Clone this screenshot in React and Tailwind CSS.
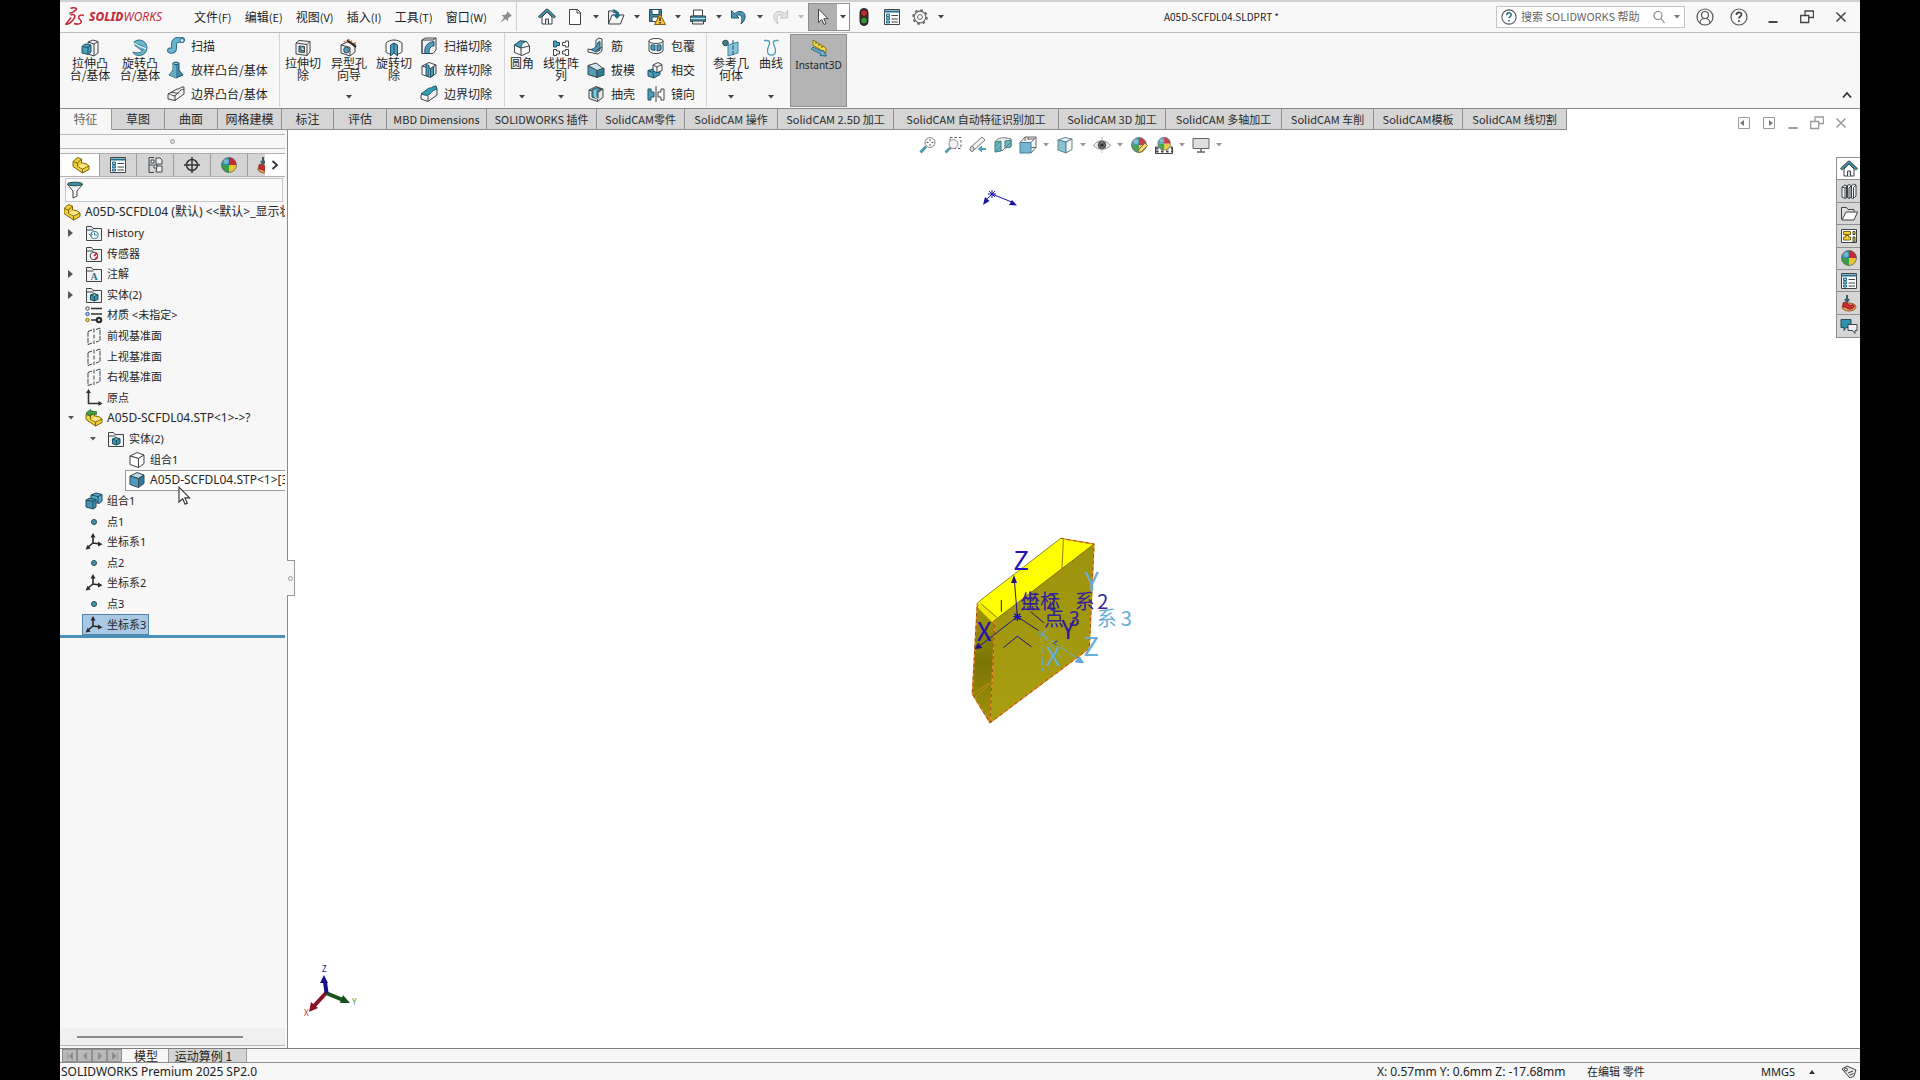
import React from 'react';

const UI = "font-['Noto_Sans','Noto_Sans_CJK_SC',sans-serif]";
const CJK = "font-['Noto_Sans_CJK_SC',sans-serif]";

function Svg({ children, size = 'size-[18px]', box = '0 0 18 18' }) {
  return (
    <svg viewBox={box} className={`${size} shrink-0`} fill="none" stroke="#3f4448" strokeWidth="1" strokeLinejoin="round" aria-hidden="true">
      {children}
    </svg>
  );
}

const teal = '#4f9dbb';
const deep = '#1f6f8b';
const pale = '#9ccfe0';

// Isometric box used by most of the feature icons
function Box({ top = '#fff', left = '#fff', right = '#e4e4e4' }) {
  return (
    <>
      <path d="M2 5 9 1.5l7 2.5-5.500 3.500z" fill={top} />
      <path d="M2 5l8.500 2.500v9L2 13.500z" fill={left} />
      <path d="M10.500 7.500 16 4v8.500l-5.500 4z" fill={right} />
    </>
  );
}

function Sphere() {
  return (
    <>
      <path d="M9 9V1.500A7.500 7.500 0 0 0 1.500 9z" fill="#2f8fb0" stroke="none" />
      <path d="M9 9h7.500A7.500 7.500 0 0 0 9 1.500z" fill="#c22a3a" stroke="none" />
      <path d="M9 9v7.500A7.500 7.500 0 0 0 16.500 9z" fill="#e6c832" stroke="none" />
      <path d="M9 9H1.500A7.500 7.500 0 0 0 9 16.500z" fill="#3c9a48" stroke="none" />
      <circle cx="6" cy="5.500" r="2.500" fill="#fff" fillOpacity=".35" stroke="none" />
      <circle cx="9" cy="9" r="7.500" stroke="#555" strokeWidth=".7" />
    </>
  );
}

function Folder({ children }) {
  return (
    <Svg>
      <path d="M1.500 16.500V2.500h5l1.500 2h8.500v12z" fill="#f2f2f2" />
      <path d="M1.500 6h7" />
      {children}
    </Svg>
  );
}

const Part = () => (
  <>
    <path d="M1 5.500 5.500 1.500l4 1.500v4l4 .500L17 10v3.500L10.500 17 1 10.500z" fill="#f2cf35" stroke="#7b6412" />
    <path d="M1 5.500 5.500 7v3.500l5 2.500L17 10M10.500 13v4M5.500 7l4-4" stroke="#7b6412" />
    <path d="M6 10.500l4-3 6 2.300-5.500 2.700z" fill="#fbe985" stroke="none" />
  </>
);

const Triad = () => (
  <g stroke="#2b2b2b" strokeWidth="1.600">
    <path d="M8 10V3M8 10l7 1M8 10l-5 4" />
    <path d="M8 0 5.500 4.500h5zM17.500 11.300l-4.500-2.700v5zM.5 16.500l5.200-1-3-3.700z" fill="#2b2b2b" stroke="none" />
  </g>
);

const Plane = () => (
  <>
    <path d="M3 4.500 7 3M11 2.500l4-1.500v12.500L11 15M7 16l-4 1.500v-13" strokeDasharray="5 1" />
    <path d="M9 1.500v15.500" strokeDasharray="4 2" />
  </>
);

const House = () => (
  <>
    <path d="M4 9v7h10V9L9 4z" fill="#fff" />
    <path d="M7.500 16v-5h3v5" fill="#dcdcdc" />
    <path d="M1 9.500 9 2l8 7.500" stroke="#3f4448" strokeWidth="3" />
    <path d="M1.500 9.300 9 2.300l7.500 7" stroke="#37a0b4" strokeWidth="1.500" />
  </>
);

const Panel = () => (
  <>
    <path d="M1.500 1.500h15v15h-15z" fill="#fff" />
    <path d="M1.500 3.500h15" stroke={deep} strokeWidth="2" />
    <path d="M3.500 6h3v2.500h-3zM3.500 9.700h3v2h-3zM3.500 13h3v2h-3z" fill={pale} stroke={deep} />
    <path d="M8.500 7.500H15M8.500 11H15M8.500 14H15" />
  </>
);

const Pointer = () => <path d="M4.500 1v13.500l3.300-3 2.200 5 2-1-2.200-4.800H14z" fill="#fff" />;

const icons = {
  home: <House />,
  newDoc: <path d="M3.500 1.500h8l3 3v12h-11zM11 1.500V5h3.500" fill="#fff" />,
  open: (
    <>
      <path d="M1.500 16V3h4l1 1.500h5V8" fill="#e8e8e8" />
      <path d="M1.500 16 5 7h12l-3.500 9z" fill="#f4f4f4" />
      <path d="M5.500 1.500c4 0 6 1.500 6 5h2.500L10 11 6 6.500h2.500c0-2-1-3-3-3.500z" fill={deep} stroke="none" />
    </>
  ),
  save: (
    <>
      <path d="M1.500 1.500h12v12h-12z" fill="#3d8ba6" stroke="#234d5c" />
      <path d="M4 1.500h7v5H4zM4 9h6v4.500H4z" fill="#fff" stroke="#234d5c" />
      <path d="M12 6l5.500 10.500h-11z" fill="#f5c242" stroke="#8a5a10" />
      <path d="M12 9.500V13M12 14v1.500" stroke="#222" strokeWidth="1.400" />
    </>
  ),
  print: (
    <>
      <path d="M4.500 2h9v6h-9z" fill="#fff" />
      <path d="M1.500 8h15v5.500h-15z" fill="#3d8ba6" />
      <path d="M1.500 10.500h15" stroke="#bfe0ea" />
      <path d="M3.500 13h11v3h-11z" fill="#eee" />
    </>
  ),
  undo: <path d="M1.500 2.500V10H9L6.500 7.500c4-2 7 1 4.500 8.500 6.500-5 5-13.500-2-12.500-2 .3-3.500 1.300-4.500 2.300z" fill="#4a94b5" stroke="#2b5b70" />,
  redo: <path d="M16.500 2.500V10H9l2.500-2.500c-4-2-7 1-4.500 8.500C.5 11 2 2.500 9 3.500c2 .3 3.500 1.300 4.500 2.300z" fill="#e3e3e3" stroke="#c4c4c4" />,
  cursor: <Pointer />,
  light: (
    <>
      <rect x="5" y=".5" width="8" height="17" rx="4" fill="#3a2a24" stroke="#222" />
      <circle cx="9" cy="5" r="2.800" fill="#c22b2b" stroke="none" />
      <circle cx="9" cy="12.500" r="2.800" fill="#2e9a3c" stroke="none" />
    </>
  ),
  panel: <Panel />,
  gear: (
    <>
      <circle cx="9" cy="9" r="5.800" stroke="#666" strokeWidth="1.200" fill="#f7f7f7" />
      <circle cx="9" cy="9" r="7" stroke="#666" strokeWidth="1.600" strokeDasharray="2.700 2.800" />
      <circle cx="9" cy="9" r="2.400" stroke="#666" fill="#fff" />
    </>
  ),
  extrude: (
    <>
      <path d="M7 3l5-2 5 1.500V14l-4 3-6-2z" fill="#f4f4f4" />
      <path d="M13 17V5L7 3M13 5l4-2.500" />
      <path d="M1 7.500 4 5l6 1v7l-3 2.500-6-1.500z" fill={teal} stroke="#1c5369" />
      <path d="M1 7.500l6 1L10 6M7 8.500v7" stroke="#1c5369" />
    </>
  ),
  revolve: (
    <>
      <path d="M3 3c4-3.500 10-2 12 2s1 9-4 11c-4 1.500-8 0-9-3 4 1.500 8 1 9-1.500L4 6.500z" fill="#6bb3cb" stroke="#2b7089" />
      <path d="M4 6.500c4-2 8 0 9 3l-2 2" stroke="#2b7089" />
      <path d="M2 4l13 6" stroke="#eef8fa" strokeWidth="1.200" />
    </>
  ),
  sweep: (
    <>
      <path d="M3 13.500c5 1 4-2 4-6 0-4 3-5.500 8-4.500" stroke="#2b7089" strokeWidth="6" strokeLinecap="round" />
      <path d="M3 13.500c5 1 4-2 4-6 0-4 3-5.500 8-4.500" stroke="#6bb3cb" strokeWidth="4" strokeLinecap="round" />
      <circle cx="15" cy="3.500" r="2" fill="#d9eef4" stroke="#2b7089" />
    </>
  ),
  loft: (
    <>
      <path d="M6 2h6v7l4 5-7 3-7-3 4-5z" fill="#4286a3" stroke="#1c5369" />
      <path d="M6 2h3v15l-7-3 4-5z" fill="#6aa9c2" stroke="none" />
      <ellipse cx="9" cy="2.300" rx="3" ry="1.200" fill={pale} stroke="#1c5369" />
    </>
  ),
  boundary: (
    <>
      <path d="M1 9l9-5c2 1 4-3 7-2v7l-9 6.500L1 14z" fill="#f1f1f1" />
      <path d="M1 9c3-1 4 3 7 1.500s5-7 9-6M8 10.500V16M4 7.500c3-1 5 2 8 0" />
    </>
  ),
  cutExtrude: (
    <>
      <path d="M2 4l3-2.500 11 1V13l-3 3.500L2 15z" fill="#f5f5f5" />
      <path d="M2 4l11 1.500v11M13 5.500l3-3" />
      <path d="M5 7l5.500.500v6L5 13z" fill={teal} />
      <path d="M7 7.200v4l3.500.300" fill="#fff" />
    </>
  ),
  hole: (
    <>
      <path d="M1 6l6-3 8 2v8l-5 4-9-3z" fill="#f1f1f1" />
      <path d="M1 6l9 2.500V17" />
      <ellipse cx="6.500" cy="11" rx="2.800" ry="3" fill={teal} />
      <path d="M7 1l9 7" stroke="#222" strokeWidth="2" />
      <path d="M4 2l1 1M9 0v2M12 1.500l-1 1.500M16 4h-2" stroke="#d9772b" strokeWidth="1.500" />
    </>
  ),
  cutRevolve: (
    <>
      <path d="M1 4c4-4 12-4 16 0v9c-1 1-3 2-4.500 2V8L9 10 5.500 8v7c-2 0-3.500-1-4.500-2z" fill="#f4f4f4" />
      <path d="M5.500 6 9 4l3.500 2v11L9 14l-3.500 3z" fill={teal} stroke="#1c5369" />
      <path d="M9 4v10" stroke="#1c5369" />
    </>
  ),
  cutSweep: (
    <>
      <path d="M2 3l3-2h11v12l-3 3.500H2z" fill="#f3f3f3" />
      <path d="M2 3h11l3-2M2 3v13.500" />
      <path d="M5 16.500C4 10 7 5 14 4.500V9c-4 0-5 3-5 7.500z" fill={teal} stroke="#1c5369" />
    </>
  ),
  cutLoft: (
    <>
      <Box />
      <path d="M6 3.500l3 1v11l-3-1zM10.500 7.500l3-1.500v8l-3 2z" fill={teal} stroke="#1c5369" />
    </>
  ),
  cutBoundary: (
    <>
      <path d="M1 10l9-4 7-2v6l-9 6.500L1 14z" fill="#f1f1f1" />
      <path d="M1 9l8-6c2 1 4-2 7-2l1 3c-4 0-6 5-9 6S3 9 1 9z" fill="#39a2b4" stroke="#1c5369" />
      <path d="M8 10.500V16" />
    </>
  ),
  fillet: (
    <>
      <path d="M1.500 6 7 2l6.500.500 3 4.500v6L9 16.500 1.500 13.500z" fill="#f8f8f8" />
      <path d="M8 9v7.500M8 9l8.500-2M1.500 6 8 9" />
      <path d="M1.500 6 7 2l6.500.500C10 3 8 5 8 9z" fill={teal} stroke="#1c5369" />
    </>
  ),
  pattern: (
    <>
      <path d="M1.500 2h3v1.500h3v3h-3V8h-3z" fill={teal} stroke="#1c5369" />
      <path d="M16.500 2h-3v1.500h-3v3h3V8h3zM1.500 10.500h3V12h3v3h-3v1.500h-3zM16.500 10.500h-3V12h-3v3h3v1.500h3z" fill="#fff" />
    </>
  ),
  rib: (
    <>
      <path d="M1 12l8 1.500V3L12 1l3 1v12l-4 3L1 15z" fill="#e9f2f5" />
      <path d="M4 12.500c4-1 6-3 7-7l2-1V13l-4 2z" fill={teal} stroke="#1c5369" />
      <path d="M9 13.500 15 10" />
    </>
  ),
  draft: (
    <>
      <path d="M1 4.500 9 2l8 6-7 3z" fill="#cfe6ee" />
      <path d="M1 4.500 10 9.500v7L1 13.500z" fill={teal} />
      <path d="M10 9.500 17 7v7l-7 2.500z" fill="#2f7c98" />
    </>
  ),
  shell: (
    <>
      <Box left="#d8ebf1" />
      <path d="M5 4.500l5-2 4 1.500-3 2v8l-6-2z" fill="#43a0b6" />
      <path d="M8 5v7l3 2" stroke="#e8f5f8" />
    </>
  ),
  wrap: (
    <>
      <path d="M2 4v10c3 3.500 11 3.500 14 0V4" fill="#f4f4f4" />
      <ellipse cx="9" cy="4" rx="7" ry="2.500" fill="#fff" />
      <path d="M4 8h4v5.500l-4-1zM10 8h4v5l-4 1z" fill={teal} stroke="#1c5369" />
    </>
  ),
  intersect: (
    <>
      <path d="M6 4l5-2.500 4 2v6L10 12 6 10z" fill="#f4f4f4" />
      <path d="M6 4l4 2v6M10 6l5-2.500" />
      <path d="M1 9.500 6 8v2l4 2 3-1.500v3L7 17l-6-2z" fill={teal} stroke="#1c5369" />
      <path d="M1 9.500l5 2 1 5.500" stroke="#1c5369" />
    </>
  ),
  mirror: (
    <>
      <path d="M1 4h3v3h3v5H4v3H1z" fill={teal} stroke="#1c5369" />
      <path d="M17 4h-3v3h-3v5h3v3h3z" fill="#fff" />
      <path d="M9 1v16" />
    </>
  ),
  refGeo: (
    <>
      <circle cx="3.500" cy="4" r="2.800" fill="#3b7f99" />
      <path d="M6 6l10-3v11L6 17z" fill="#8cc3d8" stroke="#3f88a3" />
      <path d="M11 1v16.500" stroke="#14506a" strokeDasharray="4 1.500" />
    </>
  ),
  curve: <path d="M2 1.500h2.500c4 0 3.500 3 2 6s-2 8.500 3 8.500 4.500-5.500 3-8.500-2-6 1.500-6H16.500" stroke="#4d9dbb" strokeWidth="1.300" />,
  instant: (
    <>
      <path d="M3 1l13 8v5L3 6z" fill="#f4d94a" stroke="#8a7414" />
      <path d="M6 3v2M9 5v2M12 7v2" stroke="#5c4c06" />
      <path d="M1 10l2-2 9 4.500 1-1.500 3.500 6-6.500-.500 1-1.500z" fill="#6fb0cd" stroke="#2c6a86" />
    </>
  ),
  part: <Part />,
  config: (
    <>
      <path d="M3 1.500h5M3 1.500v15h5M3 9h4" />
      <path d="M5 4h3v3H5zM8 9h3v3H8z" fill="#fff" />
      <path d="M10 2h4l2 2v4h-6zM11 10h5v6h-6z" fill="#f2f2f2" />
    </>
  ),
  target: (
    <g stroke="#333" strokeWidth="1.500">
      <circle cx="9" cy="9" r="5.500" />
      <path d="M9 1v16M1 9h16" />
    </g>
  ),
  sphere: <Sphere />,
  filter: (
    <>
      <path d="M1.500 3.500 7 10v7l4-2v-5l5.500-6.500z" fill="#f4f4f4" />
      <ellipse cx="9" cy="3" rx="7.500" ry="1.800" fill="#2c93aa" />
    </>
  ),
  zoomFit: (
    <>
      <path d="M1.500 16.500 7 10.500" stroke="#3e8aa5" strokeWidth="3" />
      <circle cx="11" cy="6.500" r="5" fill="#fff" stroke="#777" />
      <path d="M11 3v2M11 8v2M7.500 6.500h2M12.500 6.500h2" stroke="#444" />
    </>
  ),
  zoomArea: (
    <>
      <path d="M6 1.500h11v11H6z" stroke="#444" strokeDasharray="2.500 2" />
      <path d="M1.500 16.500 6 12" stroke="#3e8aa5" strokeWidth="2.500" />
      <circle cx="9.500" cy="8" r="4.500" fill="#f2f2f2" stroke="#888" />
    </>
  ),
  prevView: (
    <>
      <path d="M1 12 13 1l3 3L5 14z" fill="#f1f1f1" stroke="#666" />
      <ellipse cx="3" cy="13" rx="2" ry="2.500" fill="#ddd" stroke="#666" />
      <path d="M17 12h-4V9.500L8.500 13l4.500 3.500V14h4z" fill="#3f93b2" stroke="none" />
    </>
  ),
  section: (
    <>
      <path d="M1 6c3-5 9-5 16-3v7l-5 1-4 4z" fill="#eee" stroke="#666" />
      <path d="M1 6l6-1v10l-6 1zM11 5l6-1v7l-6 1z" fill="#5fb0bb" stroke="#2d6b78" />
      <path d="M1 11l5-5M2 15l5-5M12 11l5-5" stroke="#2d6b78" strokeWidth=".7" />
    </>
  ),
  orient: (
    <>
      <path d="M1 6.500 6 1h11v10.500L12 17" fill="#f4f4f4" stroke="#555" />
      <path d="M12 6.500 17 1M6 1v4M12 11.500h5M9 3h6M9 1v3" stroke="#555" />
      <path d="M1 6.500h11V17H1z" fill="#67b0c9" stroke="#2f748e" />
    </>
  ),
  display: (
    <>
      <path d="M2 4l7-2.500L16 3l-6 3z" fill="#e5f3f7" stroke="#4e7482" />
      <path d="M2 4l8 2v11l-8-3z" fill="#7dbdd2" stroke="#4e7482" />
      <path d="M10 6l6-3v10.500L10 17z" fill="#f2f2f2" stroke="#4e7482" />
    </>
  ),
  eye: (
    <>
      <path d="M.5 9.500C5 3 13 3 17.500 9.500 13 14.500 5 14.500.5 9.500z" fill="#ededed" stroke="#888" />
      <circle cx="9" cy="9" r="3.800" fill="#555" stroke="#333" />
      <path d="M9 1v16" stroke="#999" strokeWidth=".7" />
      <circle cx="9" cy="9" r="1.500" fill="#111" stroke="none" />
    </>
  ),
  appearance: (
    <>
      <Sphere />
      <path d="M8 17l1-4 6-6 2.500 2.500-6 6z" fill="#f0d36a" stroke="#7a6320" />
    </>
  ),
  scene: (
    <>
      <path d="M.5 11h17v6.500H.5z" fill="#fff" stroke="#333" />
      <path d="M1 12.500h16M1 15.500h16" stroke="#333" strokeWidth="2" strokeDasharray="2.500 2.500" />
      <g transform="translate(1.500 0) scale(.85)"><Sphere /></g>
    </>
  ),
  monitor: (
    <>
      <path d="M1 2.500h16v10H1z" fill="#dcdcdc" stroke="#555" />
      <path d="M9 12.500V16M5 16h8" stroke="#555" strokeWidth="1.500" />
    </>
  ),
  books: (
    <>
      <path d="M2 5l3-2 2.500 1V15L5 16.500 2 15zM6.500 4.500 9 2.500l2.500 1V15L9 16.500 6.500 15zM11 4.500 13.500 2 16 3v11l-3 2.500-2-1z" fill="#f2f2f2" />
      <path d="M2 5l3 1v10.500M5 6l2.500-2M9 6v10.500M9 6l2.500-2.500M13.500 5.500V16M13.500 5.500 16 3" />
    </>
  ),
  folder: (
    <>
      <path d="M1.500 15.500v-12h5l1.500 2h6V9" fill="#ddd" />
      <path d="M2 16 6 8h11.500L14 16z" fill="#fafafa" />
    </>
  ),
  palette: (
    <>
      <path d="M1.500 2.500h15v13h-15z" fill="#fff" />
      <path d="M3.500 4.500h7v3h-7zM3.500 13h7v-3h-2V8.500h-3V10h-2z" fill="#f2cf35" stroke="#7b6412" />
      <path d="M13 4.500h2v3h-2zM13 10h2v5h-2z" fill="#f2cf35" />
    </>
  ),
  recover: (
    <>
      <ellipse cx="9" cy="13" rx="7" ry="4" fill="#e3a15c" stroke="#9a5a2a" />
      <path d="M3 9c4-3 5 4 9 2 3-1 3 3-1 4-4 .5-5-3-8-2z" fill="#cf2a33" stroke="#8e1a22" />
      <path d="M7 1v7M5 5l2 3 2-3" stroke="#3b5d69" strokeWidth="2" />
    </>
  ),
  chat: (
    <>
      <path d="M1 2.500h10v8H6l-2 3v-3H1z" fill="#2f8fae" stroke="#1d4d5e" />
      <path d="M8 7.500h9v6h-2v3l-2.500-3H8z" fill="#f0f0f0" />
    </>
  ),
  material: (
    <>
      <path d="M6 2.500h11M6 8h11M6 14h5" stroke="#333" strokeWidth="1.500" />
      <circle cx="2.500" cy="2.500" r="1.700" fill="#eee" />
      <circle cx="2.500" cy="8" r="1.700" fill="#a9c4ee" stroke="#345a9e" />
      <circle cx="2.500" cy="14" r="1.700" fill="#f5dc63" stroke="#8a6d10" />
      <circle cx="14" cy="14" r="2.200" stroke="#333" strokeWidth="2.200" />
    </>
  ),
  plane: <Plane />,
  origin: (
    <g stroke="#333" strokeWidth="1.600">
      <path d="M3.500 3v11.500H14" />
      <path d="M3.500 0 1 4h5zM17.500 14.500l-4-2.500v5z" fill="#333" stroke="none" />
    </g>
  ),
  derived: (
    <>
      <Part />
      <path d="M1 4l4.500-3.500v2h6v3h-6v2z" fill="#3aa04a" stroke="#1f6a2b" strokeWidth=".7" />
    </>
  ),
  body: <Box right="#fff" />,
  bodySolid: <Box top="#b4dcec" left="#4b9cc4" right="#2f7ba0" />,
  combine: (
    <>
      <path d="M6 3l5-2 6 1.500V9l-3 2.500L6 9z" fill="#5ba9c8" stroke="#1c4b5f" />
      <path d="M6 3l7 1.500 4-2M13 4.500V11" stroke="#1c4b5f" />
      <path d="M1 8l4-2 6 1.500V15l-3 2-7-2z" fill="#4891b0" stroke="#1c4b5f" />
      <path d="M1 8l7 1.500 3-2M8 9.500V17" stroke="#1c4b5f" />
    </>
  ),
  point: <circle cx="9" cy="9" r="2.500" fill="#4596ad" stroke="#1d4a59" />,
  triad: <Triad />,
};

const folders = {
  history: (
    <>
      <circle cx="9.500" cy="11" r="3.700" fill="#fff" stroke="#2c8598" />
      <path d="M9.500 8.500V11H12M4 10l2 2 1.500-2" stroke="#2c8598" />
    </>
  ),
  sensor: (
    <>
      <circle cx="9" cy="11" r="3.800" fill="#fff" />
      <path d="M9 11l3-3M10 14l2.500-2" stroke="#c12b3b" strokeWidth="1.800" />
    </>
  ),
  solid: <path d="M5.500 9 9 7.500l4 1.300v4.500L9.500 15l-4-1.300zM5.500 9l4 1.200 3.500-1.400M9.500 10.200V15" fill="#3f96ae" stroke="#174e60" />,
};

function Icon({ name }) {
  return <Svg>{icons[name]}</Svg>;
}

function Caret({ className = 'text-[#444]' }) {
  return (
    <svg viewBox="0 0 6 4" className={`h-1 w-1.5 shrink-0 ${className}`} aria-hidden="true">
      <path d="M0 0h6L3 3.500z" fill="currentColor" />
    </svg>
  );
}

const menus = [
  ['文件', '(F)'],
  ['编辑', '(E)'],
  ['视图', '(V)'],
  ['插入', '(I)'],
  ['工具', '(T)'],
  ['窗口', '(W)'],
];

const quickTools = [
  { icon: 'newDoc', label: 'New' },
  { icon: 'open', label: 'Open' },
  { icon: 'save', label: 'Save' },
  { icon: 'print', label: 'Print' },
  { icon: 'undo', label: 'Undo' },
  { icon: 'redo', label: 'Redo', off: true },
];

function TitleBar() {
  return (
    <header className="flex h-[33px] items-center border-t-2 border-b border-t-[#d0d0d0] border-b-[#bdbdbd] bg-[#f8f8f8] pb-px">
      <a href="#home" className="ml-[5px] flex w-[122px] items-center gap-1 text-[#c22f3c]">
        <svg viewBox="0 0 20 20" className="size-5" fill="none" stroke="currentColor" strokeWidth="1.600" aria-hidden="true">
          <path d="M5.500 1.500c3-1.500 7.500-.5 5.500 1.500S7 5.500 4.500 6.500" />
          <path d="M5.500 8c5-1.500 5.500 1.500 2.500 5S2.500 17.500.8 17.200L6 10.500" />
          <path d="M19 8.500c-4-1.500-7 1-4.500 3.500s2.500 4.500-1 5c-2 .2-3.500 0-4.500-.5" />
        </svg>
        <span className={`${UI} text-xs italic leading-none`}><span className="font-extrabold">SOLID</span><span>WORKS</span></span>
      </a>
      <nav className={`${CJK} flex w-[304px] items-center justify-between pr-1 pl-[7px] text-xs text-[#222]`}>
        {menus.map(([name, key]) => (
          <button key={key} className="whitespace-nowrap leading-4">{name}<span className="text-[11px]">{key}</span></button>
        ))}
      </nav>
      <div className="flex h-full w-[26px] items-center justify-center border-r border-[#cfcfcf] pl-1">
        <svg viewBox="0 0 14 14" className="size-3.5" aria-hidden="true">
          <path d="M8 1l5 5-2 .5-2 2 0 3-2.500-2.500L1 13l4-5.500L2.500 5l3.500 0 2-2z" fill="#8d8d8d" />
        </svg>
      </div>
      <div className="ml-4 flex h-full items-center">
        <button aria-label="Home" className="flex w-7 justify-center"><Icon name="home" /></button>
        {quickTools.map((t) => (
          <div key={t.icon} className="flex items-center">
            <button aria-label={t.label} className="flex w-7 justify-center"><Icon name={t.icon} /></button>
            <button aria-label={`${t.label} options`} className="flex w-[13px] justify-center">
              <Caret className={t.off ? 'text-[#b5b5b5]' : 'text-[#444]'} />
            </button>
          </div>
        ))}
        <div className="ml-px flex h-7 border border-[#8e8e8e]">
          <button aria-label="Select" className="flex w-7 items-center justify-center bg-[#b1b1b1]"><Icon name="cursor" /></button>
          <button aria-label="Select options" className="flex w-3 items-center justify-center bg-white"><Caret /></button>
        </div>
        <button aria-label="Rebuild" className="flex w-7 justify-center"><Icon name="light" /></button>
        <button aria-label="File properties" className="flex w-7 justify-center"><Icon name="panel" /></button>
        <button aria-label="Options" className="flex w-7 justify-center"><Icon name="gear" /></button>
        <button aria-label="More options" className="flex w-[13px] justify-center"><Caret /></button>
      </div>
      <h1 className={`${CJK} flex-1 text-center text-[10px] text-[#222]`}>A05D-SCFDL04.SLDPRT *</h1>
      <div className="flex h-[22px] w-[189px] items-center border border-[#c5c5c5] bg-white px-1">
        <HelpMark className="size-4 text-[#2e6f87]" />
        <input
          aria-label="Search"
          placeholder="搜索 SOLIDWORKS 帮助"
          className={`${CJK} ml-1 w-0 flex-1 bg-transparent text-[11px] text-[#555] outline-none placeholder:text-[#666]`}
        />
        <svg viewBox="0 0 14 14" className="mr-2 size-3.5" fill="none" stroke="#888" strokeWidth="1.200" aria-hidden="true">
          <circle cx="6" cy="5.500" r="4" />
          <path d="M9 8.500 12.500 13" />
        </svg>
        <Caret className="text-[#777]" />
      </div>
      <div className="flex items-center pl-[3px] pr-0.5">
        <button aria-label="Account" className="flex w-[34px] justify-center">
          <svg viewBox="0 0 18 18" className="size-[18px]" fill="none" stroke="#555" strokeWidth="1.200" aria-hidden="true">
            <circle cx="9" cy="9" r="8" />
            <circle cx="9" cy="7" r="3.500" />
            <path d="M4 15c0-6 10-6 10 0" />
          </svg>
        </button>
        <button aria-label="Help" className="flex w-[34px] justify-center"><HelpMark className="size-[18px] text-[#444]" /></button>
        <WindowButtons cell="w-[34px]" color="text-[#444]" />
      </div>
    </header>
  );
}

function HelpMark({ className }) {
  return (
    <svg viewBox="0 0 18 18" className={`${className} shrink-0`} fill="none" stroke="currentColor" aria-hidden="true">
      <circle cx="9" cy="9" r="8" stroke="#555" strokeWidth="1.200" />
      <path d="M6.500 7c0-3.500 5-3.500 5-.5 0 2-2.500 2-2.500 4M9 12.300v1.700" strokeWidth="1.700" />
    </svg>
  );
}

function WindowButtons({ cell, color }) {
  return (
    <div className={`flex ${color}`}>
      <button aria-label="Minimize" className={`flex justify-center ${cell}`}>
        <svg viewBox="0 0 14 14" className="size-3.5" stroke="currentColor" strokeWidth="2" aria-hidden="true"><path d="M2.500 12h9" /></svg>
      </button>
      <button aria-label="Restore" className={`flex justify-center ${cell}`}>
        <svg viewBox="0 0 14 14" className="size-3.5" fill="none" stroke="currentColor" strokeWidth="1.300" aria-hidden="true">
          <path d="M5 5V1h8.500v6.500H9M.7 5.500h8v7h-8z" />
        </svg>
      </button>
      <button aria-label="Close" className={`flex justify-center ${cell}`}>
        <svg viewBox="0 0 14 14" className="size-3.5" stroke="currentColor" strokeWidth="1.500" aria-hidden="true"><path d="M2.500 2.500l9 9M11.500 2.500l-9 9" /></svg>
      </button>
    </div>
  );
}

function BigTool({ icon, lines, width, caret }) {
  return (
    <button className={`${CJK} flex h-[72px] flex-col items-center pt-1.5 text-xs leading-3 text-[#1f1f1f] ${width}`}>
      <Icon name={icon} />
      {lines.map((l) => <span key={l} className="whitespace-nowrap">{l}</span>)}
      {caret && <span className="mt-auto pb-1.5"><Caret /></span>}
    </button>
  );
}

function SmallTools({ items, width }) {
  return (
    <div className={`${CJK} flex flex-col pt-px text-xs text-[#1f1f1f] ${width}`}>
      {items.map(([icon, label]) => (
        <button key={label} className="flex h-6 items-center gap-1.5 whitespace-nowrap">
          <Icon name={icon} />
          {label}
        </button>
      ))}
    </div>
  );
}

const Divider = () => <div className="w-px bg-[#d5d5d5]" />;

function Ribbon() {
  return (
    <div className="flex h-[76px] items-stretch border-b border-[#8b8b8b] bg-[#f7f7f7] pb-px">
      <div className="flex w-[219px] pl-1">
        <BigTool icon="extrude" lines={['拉伸凸', '台/基体']} width="w-[52px]" />
        <BigTool icon="revolve" lines={['旋转凸', '台/基体']} width="w-[48px]" />
        <SmallTools width="ml-[3px] w-[112px]" items={[['sweep', '扫描'], ['loft', '放样凸台/基体'], ['boundary', '边界凸台/基体']]} />
      </div>
      <Divider />
      <div className="flex w-[224px]">
        <BigTool icon="cutExtrude" lines={['拉伸切', '除']} width="w-[46px]" />
        <BigTool icon="hole" lines={['异型孔', '向导']} width="w-[46px]" caret />
        <BigTool icon="cutRevolve" lines={['旋转切', '除']} width="w-[44px]" />
        <SmallTools width="ml-1 w-[80px]" items={[['cutSweep', '扫描切除'], ['cutLoft', '放样切除'], ['cutBoundary', '边界切除']]} />
      </div>
      <Divider />
      <div className="flex w-[201px]">
        <BigTool icon="fillet" lines={['圆角']} width="w-[34px]" caret />
        <BigTool icon="pattern" lines={['线性阵', '列']} width="w-[44px]" caret />
        <SmallTools width="ml-1 w-[60px]" items={[['rib', '筋'], ['draft', '拔模'], ['shell', '抽壳']]} />
        <SmallTools width="w-[56px]" items={[['wrap', '包覆'], ['intersect', '相交'], ['mirror', '镜向']]} />
      </div>
      <Divider />
      <div className="flex w-[83px]">
        <BigTool icon="refGeo" lines={['参考几', '何体']} width="w-[48px]" caret />
        <BigTool icon="curve" lines={['曲线']} width="w-[32px]" caret />
      </div>
      <button className={`${UI} mt-px flex w-[57px] flex-col items-center border border-[#8f8f8f] bg-[#b4b4b4] pt-1 text-[10px] leading-4 text-[#1f1f1f]`}>
        <Icon name="instant" />
        Instant3D
      </button>
      <button aria-label="Collapse ribbon" className="mt-auto ml-auto mr-2 mb-2">
        <svg viewBox="0 0 10 8" className="h-2 w-2.5" fill="none" stroke="#333" strokeWidth="1.800" aria-hidden="true"><path d="M1 6.500l4-4.500 4 4.500" /></svg>
      </button>
    </div>
  );
}

const tabs = [
  ['特征', 'w-[52px] text-xs'],
  ['草图', 'w-[53px] text-xs'],
  ['曲面', 'w-[53px] text-xs'],
  ['网格建模', 'w-[64px] text-xs'],
  ['标注', 'w-[52px] text-xs'],
  ['评估', 'w-[53px] text-xs'],
  ['MBD Dimensions', 'w-[100px] text-[11px]'],
  ['SOLIDWORKS 插件', 'w-[110px] text-[11px]'],
  ['SolidCAM零件', 'w-[88px] text-[11px]'],
  ['SolidCAM 操作', 'w-[93px] text-[11px]'],
  ['SolidCAM 2.5D 加工', 'w-[116px] text-[11px]'],
  ['SolidCAM 自动特征识别加工', 'w-[165px] text-[11px]'],
  ['SolidCAM 3D 加工', 'w-[107px] text-[11px]'],
  ['SolidCAM 多轴加工', 'w-[116px] text-[11px]'],
  ['SolidCAM 车削', 'w-[92px] text-[11px]'],
  ['SolidCAM模板', 'w-[89px] text-[11px]'],
  ['SolidCAM 线切割', 'w-[104px] text-[11px]'],
];

function TabStrip() {
  return (
    <div role="tablist" className={`${CJK} flex h-[21px] text-[#2a2a2a]`}>
      {tabs.map(([name, width], i) => (
        <button
          key={name}
          role="tab"
          aria-selected={i === 0}
          className={`${width} flex shrink-0 items-center justify-center whitespace-nowrap border-r border-b pb-px leading-4 ${
            i === 0 ? 'border-r-[#9a9a9a] border-b-transparent bg-[#f7f7f7] text-[#666]' : 'border-[#8f8f8f] bg-[#d5d5d5]'
          }`}
        >
          {name}
        </button>
      ))}
    </div>
  );
}

const tree = [
  { icon: 'part', label: 'A05D-SCFDL04 (默认) <<默认>_显示状态 1>', root: true, latin: true },
  { folder: 'history', label: 'History', arrow: 'right' },
  { folder: 'sensor', label: '传感器' },
  { folder: 'note', label: '注解', arrow: 'right' },
  { folder: 'solid', label: '实体(2)', arrow: 'right' },
  { icon: 'material', label: '材质 <未指定>' },
  { icon: 'plane', label: '前视基准面' },
  { icon: 'plane', label: '上视基准面' },
  { icon: 'plane', label: '右视基准面' },
  { icon: 'origin', label: '原点' },
  { icon: 'derived', label: 'A05D-SCFDL04.STP<1>->?', arrow: 'down', latin: true },
  { folder: 'solid', label: '实体(2)', level: 'pl-[22px]', arrow: 'down' },
  { icon: 'body', label: '组合1', level: 'pl-[43px]' },
  { icon: 'bodySolid', label: 'A05D-SCFDL04.STP<1>[3]', level: 'pl-[43px]', hover: true, latin: true },
  { icon: 'combine', label: '组合1' },
  { icon: 'point', label: '点1' },
  { icon: 'triad', label: '坐标系1' },
  { icon: 'point', label: '点2' },
  { icon: 'triad', label: '坐标系2' },
  { icon: 'point', label: '点3' },
  { icon: 'triad', label: '坐标系3', selected: true },
];

function TreeRow({ item }) {
  return (
    <li className={`flex min-h-0 items-center overflow-hidden whitespace-nowrap ${item.level || ''} ${item.latin ? 'text-xs' : 'text-[11px]'}`}>
      {!item.root && (
        <span className="flex w-[18px] shrink-0 pl-1">
          {item.arrow === 'right' && <svg viewBox="0 0 5 8" className="h-2 w-[5px]" aria-hidden="true"><path d="M0 0l5 4-5 4z" fill="#555" /></svg>}
          {item.arrow === 'down' && <Caret className="text-[#555]" />}
        </span>
      )}
      <button
        className={`flex h-full items-center gap-1 border px-0.5 leading-4 ${
          item.selected ? 'border-[#5585a8] bg-[#a8c8e4]' : item.hover ? 'border-[#9a9a9a] bg-white' : 'border-transparent'
        } ${item.root ? '-ml-1' : ''}`}
      >
        {item.folder ? (
          <Folder>
            {item.folder === 'note'
              ? <text x="9" y="15" textAnchor="middle" fontSize="10" fontWeight="700" fontFamily="Liberation Serif, serif" fill="#2c6f88" stroke="none">A</text>
              : folders[item.folder]}
          </Folder>
        ) : <Icon name={item.icon} />}
        {item.label}
      </button>
    </li>
  );
}

const panelTabs = [
  ['part', 'FeatureManager'],
  ['panel', 'PropertyManager'],
  ['config', 'ConfigurationManager'],
  ['target', 'DimXpertManager'],
  ['sphere', 'DisplayManager'],
];

function FeaturePanel() {
  return (
    <aside className="flex w-[228px] shrink-0 flex-col border-r border-[#8c8c8c] bg-[#f7f7f7] pt-1 pr-0.5">
      <div className="flex h-[15px] items-center justify-center border-y border-[#b8b8b8]">
        <span className="size-[5px] rounded-full border border-[#999] bg-[#ddd]" />
      </div>
      <div className="mt-1 flex h-6 border-t border-b border-[#b0b0b0] pl-0.5">
        {panelTabs.map(([icon, label], i) => (
          <button
            key={icon}
            aria-label={label}
            className={`flex w-[37px] items-center justify-center border-r border-[#9c9c9c] ${i === 0 ? 'w-[38px] bg-white' : 'bg-[#d4d4d4]'}`}
          >
            <Icon name={icon} />
          </button>
        ))}
        <button aria-label="CAM" className="flex w-[17px] items-center overflow-hidden bg-[#d4d4d4] pl-2"><Icon name="recover" /></button>
        <button aria-label="More tabs" className="flex flex-1 items-center justify-center bg-white">
          <svg viewBox="0 0 8 12" className="h-3 w-2" fill="none" stroke="#333" strokeWidth="1.800" aria-hidden="true"><path d="M1.500 2l4.500 4-4.500 4" /></svg>
        </button>
      </div>
      <label className="mt-px mr-0.5 ml-[5px] flex h-6 items-center border border-[#c6c6c6] bg-[#fafafa]">
        <Icon name="filter" />
        <input aria-label="Filter tree" className="w-0 flex-1 bg-transparent text-[11px] outline-none" />
      </label>
      <ul className={`${UI} grid h-[433px] auto-rows-fr pl-1 text-[#262626]`}>
        {tree.map((item, i) => <TreeRow key={i} item={item} />)}
      </ul>
      <div className="h-[3px] bg-[#4a8fb8]" />
      <div className="mt-auto flex h-[18px] items-center border-b border-[#b5b5b5] bg-[#f0f0f0] pl-[17px]">
        <div className="h-0.5 w-[166px] bg-[#8b8b8b]" />
      </div>
      <div className="h-0.5" />
    </aside>
  );
}

const viewTools = [
  ['zoomFit', 'Zoom to fit'],
  ['zoomArea', 'Zoom to area'],
  ['prevView', 'Previous view'],
  ['section', 'Section view'],
  ['orient', 'View orientation', true],
  ['display', 'Display style', true],
  ['eye', 'Hide or show items', true],
  ['appearance', 'Edit appearance'],
  ['scene', 'Apply scene', true],
  ['monitor', 'View settings', true],
];

const taskPanes = [
  ['home', 'Resources'],
  ['books', 'Design library'],
  ['folder', 'File explorer'],
  ['palette', 'View palette'],
  ['sphere', 'Appearances'],
  ['panel', 'Custom properties'],
  ['recover', 'Recovery'],
  ['chat', 'Forum'],
];

function Model() {
  return (
    <svg viewBox="0 0 660 660" className="absolute top-[390px] left-[652px] size-[220px]" fill="none" strokeWidth="3">
      <defs>
        <linearGradient id="face" x1="0" y1="0" x2="0" y2="1">
          <stop offset="0" stopColor="#9c930e" />
          <stop offset="1" stopColor="#a89e10" />
        </linearGradient>
        <linearGradient id="side" x1="0" y1="0" x2="0" y2="1">
          <stop offset="0" stopColor="#a39a0a" />
          <stop offset=".5" stopColor="#7b7405" />
          <stop offset="1" stopColor="#a0960a" />
        </linearGradient>
      </defs>
      <path d="M112 250 125 238 362 55l100 17-297 228z" fill="#ffff00" />
      <path d="M112 250 97 522l53 86 15-308z" fill="url(#side)" />
      <path d="M165 300 462 72l-14 313-298 223z" fill="url(#face)" />
      <path d="M112 262c8-24 40 14 62 30l-18 14z" fill="#f0e800" />
      <path d="M112 250 125 238 362 55M165 300 462 72M122 250l48 42M370 60l-4 85" stroke="#55480a" strokeWidth="2" />
      <path d="M366 145l-2 95" stroke="#c77b16" strokeWidth="2" />
      <path d="M362 55l100 17-14 313-298 223-53-86 15-272M150 608l15-308" stroke="#f08a1e" strokeWidth="4" />
      <path d="M362 55l100 17-14 313-298 223-53-86 15-272M150 608l15-308" stroke="#4d3a18" strokeDasharray="10 9" strokeWidth="2" />
      <path d="M97 522l50-32M106 532l54-50" stroke="#e28a1a" strokeWidth="2" />
      {/* coordinate systems */}
      <path d="M232 290l-9-110M232 290l64 42M184 275v-35M190 383l42-34 42 31M272 275l40 34M232 290 110 385" stroke="#22167c" />
      <path d="M222 165l-9 24h18zM103 388l24-4-12-16z" fill="#22167c" />
      <path d="M220 290h24M232 278v24M223 281l18 18M241 281l-18 18" stroke="#1b10b0" strokeWidth="4" />
      <path d="M352 363l-12 6 12 6" stroke="#22167c" />
      <path d="M304 342l4 112M304 342l122 82M304 342l60 70M304 342l54-40" stroke="#68acd8" strokeDasharray="26 8" />
      <path d="M430 428l-24-2 12-16zM292 342h24M304 330v24" stroke="#4fa0d6" fill="#68acd8" />
      <g fontFamily="Noto Sans CJK SC, sans-serif" fill="#2210b8">
        <g fontSize="78">
          <text x="220" y="149">Z</text>
          <text x="110" y="364">X</text>
          <text x="364" y="356" fill="#2b1d96">Y</text>
          <text x="435" y="214" fill="#68acd8">Y</text>
          <text x="318" y="438" fill="#68acd8">X</text>
          <text x="430" y="408" fill="#68acd8">Z</text>
        </g>
        <g fontSize="60" fill="#33229a">
          <text x="241 300 404 472" y="267">坐标系2</text>
          <text x="241 318" y="267">点2</text>
          <text x="312 386" y="318">点3</text>
          <text x="470 542" y="318" fill="#68acd8">系3</text>
        </g>
      </g>
    </svg>
  );
}

function Viewport() {
  return (
    <main className="relative flex flex-1 flex-col bg-white">
      <div className="flex h-[30px] items-center justify-center pr-2 opacity-90">
        {viewTools.map(([icon, label, caret]) => (
          <div key={icon} className="flex items-center">
            <button aria-label={label} className="flex w-[25px] justify-center"><Icon name={icon} /></button>
            {caret && <button aria-label={`${label} options`} className="flex w-3 justify-center"><Caret className="text-[#8a8a8a]" /></button>}
          </div>
        ))}
      </div>
      <div className="-mt-[3px] grid h-[181px] w-6 auto-rows-fr self-end border border-r-0 border-[#8f8f8f]">
        {taskPanes.map(([icon, label], i) => (
          <button key={icon} aria-label={label} className={`flex items-center justify-center border-b border-[#8f8f8f] last:border-b-0 ${i === 0 ? 'bg-white' : 'bg-[#d6d6d6]'}`}>
            <Icon name={icon} />
          </button>
        ))}
      </div>

      {/* sketch origin in the canvas */}
      <svg viewBox="0 0 40 20" className="absolute top-[58px] left-[692px] h-5 w-10" fill="none" stroke="#1a12a8">
        <path d="M12 6l22 9M12 6l-6 6M8 6h8M12 2v8M9 3l6 6M15 3l-6 6" />
        <path d="M37 17.500l-8-.5 3-5zM3 17l2-8 4.500 4z" fill="#1a12a8" stroke="none" />
      </svg>
      <Model />
      <svg viewBox="0 0 60 60" className="absolute bottom-[30px] left-[14px] size-[60px]">
        <path d="M24 35 12 48" stroke="#8c1024" strokeWidth="4" />
        <path d="M7 54l2-10 7 6z" fill="#8c1024" />
        <path d="M24 35l17 7" stroke="#175217" strokeWidth="4" />
        <path d="M48 45l-10 0 3-8z" fill="#175217" />
        <path d="M24.500 35 23 24" stroke="#15118a" strokeWidth="4" />
        <path d="M22 17l4 8h-8z" fill="#15118a" />
        <g fontFamily="Noto Sans, sans-serif" fontSize="8">
          <text x="20" y="14" fill="#15118a">Z</text>
          <text x="50" y="47" fill="#3c9a3c">Y</text>
          <text x="2" y="58" fill="#c0303c">X</text>
        </g>
      </svg>
      <button aria-label="Collapse panel" className="absolute top-[430px] -left-px flex h-9 w-2 items-center justify-center border border-l-0 border-[#999] bg-[#f7f7f7]">
        <span className="size-[5px] rounded-full border border-[#999]" />
      </button>
    </main>
  );
}

const navGlyphs = ['M2 1v8M8 1 4 5l4 4z', 'M7 1 3 5l4 4z', 'M3 1l4 4-4 4z', 'M8 1v8M2 1l4 4-4 4z'];

function Footer() {
  return (
    <footer className={`${UI} bg-[#f7f7f7] text-xs text-[#222]`}>
      <div className="flex h-[14px] border-t border-[#7d7d7d]">
        <div className="ml-0.5 flex">
          {navGlyphs.map((d) => (
            <button key={d} aria-label="Scroll tabs" className="flex w-[15px] items-center justify-center border border-[#8f8f8f] bg-[#b9b9b9]">
              <svg viewBox="0 0 10 10" className="size-2" fill="#8a8a8a" stroke="#8a8a8a"><path d={d} /></svg>
            </button>
          ))}
        </div>
        <button className={`${CJK} w-[46px] bg-[#f7f7f7] pl-0.5 leading-3`}>模型</button>
        <button className={`${CJK} w-[79px] border-x border-[#9a9a9a] bg-[#d4d4d4] pr-2 leading-3`}>运动算例 1</button>
      </div>
      <div className="flex h-[18px] items-center border-t border-[#8d8d8d] leading-4">
        <span className="pl-px">SOLIDWORKS Premium 2025 SP2.0</span>
        <span className="ml-auto w-[210px]">X: 0.57mm Y: 0.6mm Z: -17.68mm</span>
        <span className="w-[174px] text-[11px]">在编辑 零件</span>
        <button className="flex w-20 items-center gap-3.5 text-[11px]">
          MMGS
          <svg viewBox="0 0 6 4" className="h-1 w-1.5" aria-hidden="true"><path d="M0 4h6L3 0z" fill="#333" /></svg>
        </button>
        <svg viewBox="0 0 16 14" className="mr-[3px] h-3.5 w-4" fill="#e6e6e6" stroke="#444" aria-hidden="true">
          <path d="M1 4l5-3 9 4-2 6-4 2z" />
          <circle cx="5" cy="4.500" r="1.500" />
          <path d="M7 8l5-2M8.500 10l4-1.500" />
        </svg>
      </div>
    </footer>
  );
}

export default function App() {
  return (
    <div className="bg-black px-[60px]">
      <div className={`${UI} flex h-screen flex-col overflow-hidden bg-white`}>
        <TitleBar />
        <Ribbon />
        <div className="flex justify-between bg-white">
          <TabStrip />
          <div className="flex items-center pt-1.5 pr-[7px]">
            <button aria-label="Previous pane" className="flex w-[25px] justify-center">
              <svg viewBox="0 0 14 14" className="size-3.5" fill="none" stroke="#999" aria-hidden="true"><path d="M1.500 1.500h11v11h-11z" /><path d="M7 4v6L3 7z" fill="#777" stroke="none" /></svg>
            </button>
            <button aria-label="Next pane" className="flex w-[25px] justify-center">
              <svg viewBox="0 0 14 14" className="size-3.5" fill="none" stroke="#999" aria-hidden="true"><path d="M1.500 1.500h11v11h-11z" /><path d="M7 4v6l4-3z" fill="#777" stroke="none" /></svg>
            </button>
            <WindowButtons cell="w-6" color="text-[#999]" />
          </div>
        </div>
        <div className="flex min-h-0 flex-1">
          <FeaturePanel />
          <Viewport />
        </div>
        <Footer />
      </div>
      {/* mouse pointer over the tree */}
      <svg viewBox="0 0 18 18" className="pointer-events-none absolute top-[486px] left-[174px] h-5 w-5" stroke="#333">
        <Pointer />
      </svg>
    </div>
  );
}
